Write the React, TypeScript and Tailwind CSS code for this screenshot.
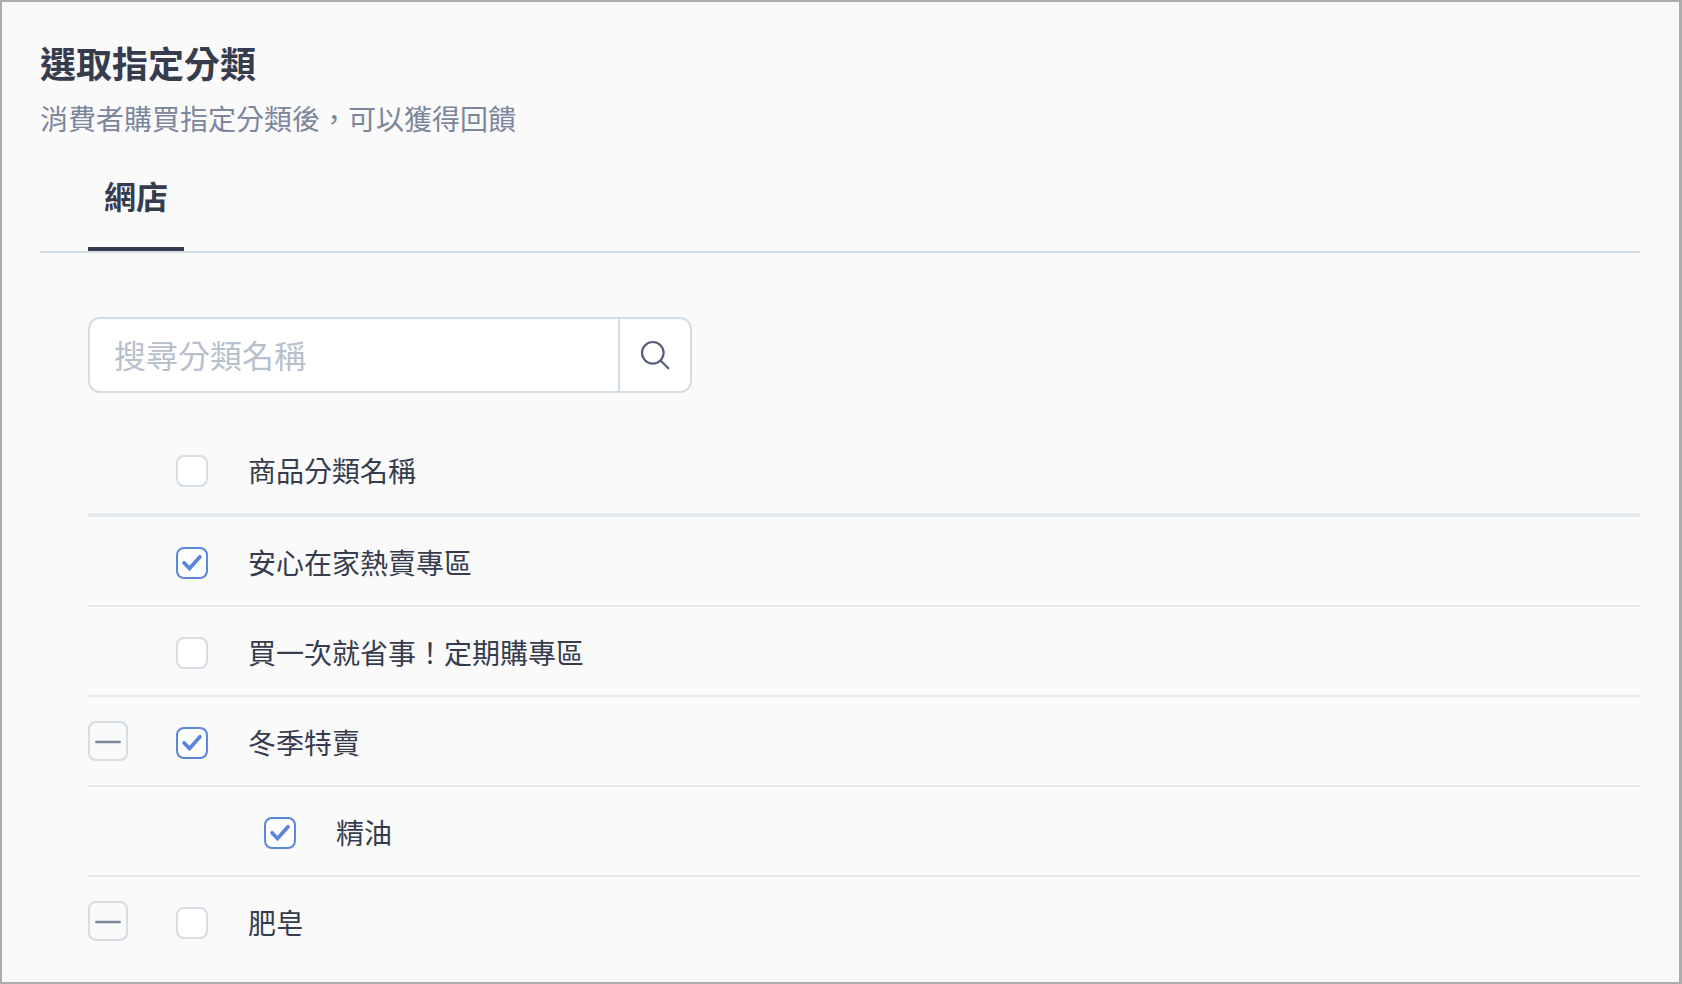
import React, { useState } from 'react';

type Category = {
  id: string;
  name: string;
  expandable?: boolean;
  parent?: string;
};

const categories: Category[] = [
  { id: 'home', name: '安心在家熱賣專區' },
  { id: 'subscribe', name: '買一次就省事！定期購專區' },
  { id: 'winter', name: '冬季特賣', expandable: true },
  { id: 'oil', name: '精油', parent: 'winter' },
  { id: 'soap', name: '肥皂', expandable: true }
];

type CheckboxProps = {
  id: string;
  label: string;
  checked: boolean;
  onChange: () => void;
};

const Checkbox = ({ id, label, checked, onChange }: CheckboxProps) => (
  <div className="flex items-center gap-10 pt-1 font-normal">
    <span className="grid size-8 shrink-0">
      <input
        id={id}
        type="checkbox"
        checked={checked}
        onChange={onChange}
        className="col-start-1 row-start-1 size-8 appearance-none rounded-lg border-2 border-[#d5dde5] bg-white checked:border-[#5a87de]"
      />
      {checked && (
        <svg viewBox="0 0 32 32" className="pointer-events-none col-start-1 row-start-1 size-8" aria-hidden="true">
          <path d="M8 15.8l5.5 5.7L24 9.8" fill="none" stroke="#5a87de" strokeWidth="3.8" strokeLinecap="round" />
        </svg>
      )}
    </span>
    <label htmlFor={id} className="pb-0.5 text-[28px] leading-[30px]">
      {label}
    </label>
  </div>
);

const App = () => {
  const [selected, setSelected] = useState<string[]>(['home', 'winter', 'oil']);
  const [collapsed, setCollapsed] = useState<string[]>([]);
  const [keyword, setKeyword] = useState('');

  const flip = (list: string[], id: string) =>
    list.includes(id) ? list.filter((item) => item !== id) : [...list, id];

  const allSelected = selected.length === categories.length;
  const visible = categories.filter(
    (category) => category.name.includes(keyword) && !(category.parent && collapsed.includes(category.parent))
  );

  return (
    <main
      lang="zh-Hant"
      className="min-h-screen border-2 border-r-3 border-[#adadad] bg-[#fafafa] pt-9 pr-[39px] pl-[38px] font-['Noto_Sans_CJK_TC',sans-serif] text-[#363c4e]"
    >
      <h1 className="text-4xl leading-12 font-bold">選取指定分類</h1>
      <p className="mt-3 text-[28px] leading-10 text-[#7c869c]">消費者購買指定分類後，可以獲得回饋</p>

      <div role="tablist" className="flex border-b-2 border-[#d3dde6] pl-12">
        <button
          type="button"
          role="tab"
          aria-selected="true"
          className="border-b-4 border-[#383c50] px-4 pt-[35px] pb-[30px] text-[32px] leading-11 font-bold"
        >
          網店
        </button>
      </div>

      <section role="tabpanel" aria-label="網店" className="pt-16 pl-12">
        <form
          onSubmit={(event) => event.preventDefault()}
          className="flex h-[76px] max-w-[604px] overflow-hidden rounded-xl border-2 border-[#d3dde6] bg-white"
        >
          <input
            type="text"
            aria-label="搜尋分類名稱"
            placeholder="搜尋分類名稱"
            value={keyword}
            onChange={(event) => setKeyword(event.target.value)}
            className="min-w-0 flex-1 px-6 pb-0.5 text-[32px] outline-none placeholder:text-[#b8bfcd]"
          />
          <button
            type="submit"
            aria-label="搜尋"
            className="flex w-18 items-center justify-center border-l-2 border-[#d3dde6]"
          >
            <svg viewBox="0 0 30 30" className="size-[30px]" fill="none" stroke="#555e7a" strokeWidth="2.2" strokeLinecap="round" aria-hidden="true">
              <circle cx="12.8" cy="12.8" r="10.8" />
              <path d="M20.5 20.5l7.8 7.8" />
            </svg>
          </button>
        </form>

        <table className="mt-8 w-full border-separate border-spacing-0 text-left">
          <thead>
            <tr>
              <td className="h-[92px] w-22 border-b-4 border-[#e5eaef]"></td>
              <th scope="col" className="border-b-4 border-[#e5eaef]">
                <Checkbox
                  id="all"
                  label="商品分類名稱"
                  checked={allSelected}
                  onChange={() => setSelected(allSelected ? [] : categories.map((category) => category.id))}
                />
              </th>
            </tr>
          </thead>
          <tbody className="[&>tr:last-child>td]:h-22 [&>tr:last-child>td]:border-b-0">
            {visible.map((category) => (
              <tr key={category.id}>
                <td className="h-[90px] border-b-2 border-[#e5eaef]">
                  {category.expandable && (
                    <button
                      type="button"
                      aria-label={category.name}
                      aria-expanded={!collapsed.includes(category.id)}
                      onClick={() => setCollapsed(flip(collapsed, category.id))}
                      className="flex size-10 items-center justify-center rounded-lg border-2 border-[#d5dde5]"
                    >
                      <svg viewBox="0 0 36 36" className="size-9 shrink-0" fill="none" stroke="#7c869c" strokeWidth="2.4" strokeLinecap="round" aria-hidden="true">
                        <path d="M6.2 19h23.6" />
                        {collapsed.includes(category.id) && <path d="M18 7.2v23.6" />}
                      </svg>
                    </button>
                  )}
                </td>
                <td className={`border-b-2 border-[#e5eaef] ${category.parent ? 'pl-22' : ''}`}>
                  <Checkbox
                    id={category.id}
                    label={category.name}
                    checked={selected.includes(category.id)}
                    onChange={() => setSelected(flip(selected, category.id))}
                  />
                </td>
              </tr>
            ))}
          </tbody>
        </table>
      </section>
    </main>
  );
};

export default App;
